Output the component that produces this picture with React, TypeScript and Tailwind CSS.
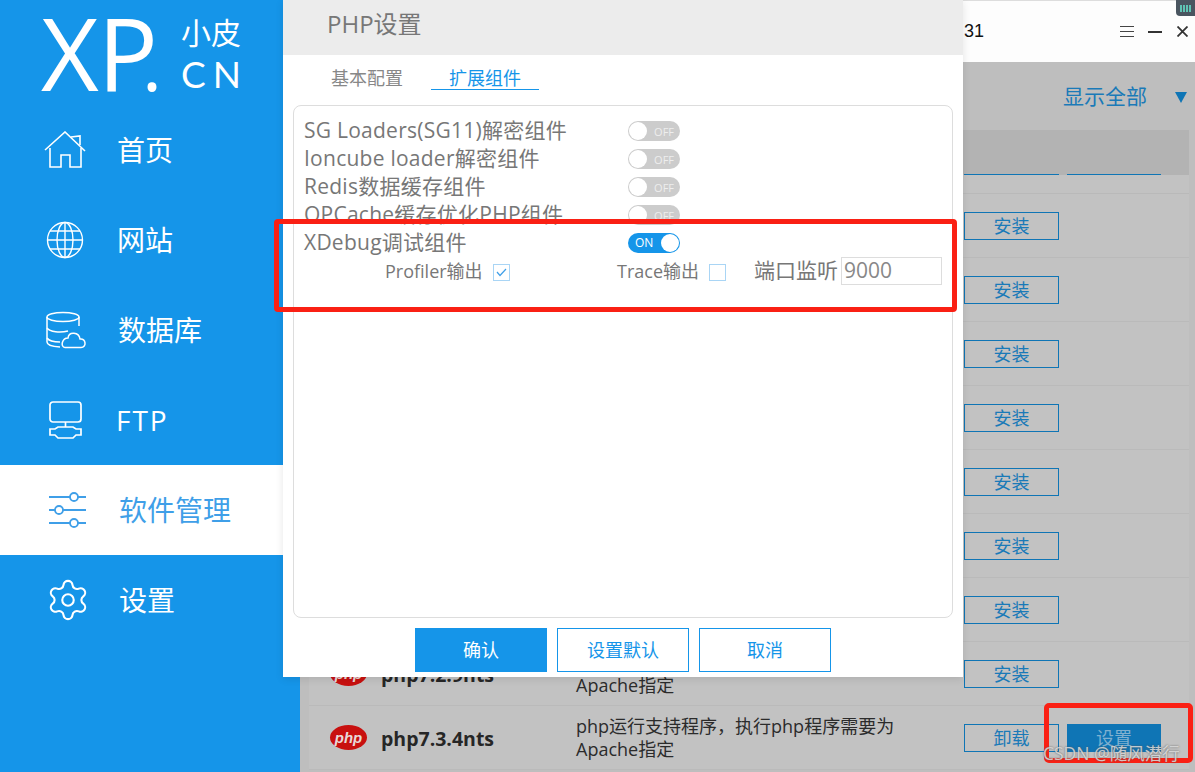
import { Settings } from "lucide-react";

const UI_FONT = "font-['Open_Sans','Noto_Sans_CJK_SC',sans-serif]";

const HomeIcon = () => (
  <svg width="42" height="38" viewBox="0 0 42 38" fill="none" stroke="currentColor" strokeWidth="1.6">
    <path d="M1 19 L21 1 L41 20" />
    <path d="M27 6 L36 5 L36 14" />
    <path d="M6 17 V36 H17 V24 H26 V36 H37 V17" />
  </svg>
);

const GlobeIcon = () => (
  <svg width="38" height="38" viewBox="0 0 38 38" fill="none" stroke="currentColor" strokeWidth="1.4">
    <circle cx="19" cy="19" r="17.5" />
    <ellipse cx="19" cy="19" rx="8" ry="17.5" />
    <path d="M19 1.5 V36.5 M1.5 19 H36.5 M4 10 H34 M4 28 H34" />
  </svg>
);

const DatabaseIcon = () => (
  <svg width="40" height="38" viewBox="0 0 40 38" fill="none" stroke="currentColor" strokeWidth="1.5">
    <ellipse cx="17" cy="6" rx="16" ry="4.5" />
    <path d="M1 6 V31 C1 34 6 35.5 14 36" />
    <path d="M33 6 V15" />
    <path d="M1 17 C4 21 14 22 22 20" />
    <path d="M1 27 C3 30 8 31 14 31" />
    <path d="M19 36.5 H35 C41 36.5 40 27 34 28 C33 21 23 20 22 27 C16 27 14 36 19 36.5 Z" />
  </svg>
);

const FtpIcon = () => (
  <svg width="33" height="38" viewBox="0 0 33 38" fill="none" stroke="currentColor" strokeWidth="1.7">
    <rect x="1" y="1" width="31" height="20" rx="3" />
    <path d="M16.5 21 V26" />
    <path d="M9 26 H24 L27 28 H32 V34 H27 L24 37 H9 L6 34 H1 V28 H6 Z" />
  </svg>
);

const SlidersIcon = () => (
  <svg width="37" height="38" viewBox="0 0 37 38" fill="none" stroke="currentColor" strokeWidth="1.8">
    <path d="M0 6 H21 M29 6 H37" />
    <circle cx="25" cy="6" r="4" />
    <path d="M0 19 H6 M14 19 H37" />
    <circle cx="10" cy="19" r="4" />
    <path d="M0 32 H21 M29 32 H37" />
    <circle cx="25" cy="32" r="4" />
  </svg>
);

const NAV_ITEMS = [
  { title: "首页", icon: <HomeIcon />, iconBox: "w-[117px] pl-[44px]" },
  { title: "网站", icon: <GlobeIcon />, iconBox: "w-[117px] pl-[46px]" },
  { title: "数据库", icon: <DatabaseIcon />, iconBox: "w-[118px] pl-[46px]" },
  { title: "FTP", icon: <FtpIcon />, iconBox: "w-[116px] pl-[49px]" },
  { title: "软件管理", icon: <SlidersIcon />, iconBox: "w-[119px] pl-[49px]", active: true },
  { title: "设置", icon: <Settings size={46} strokeWidth={1.1} />, iconBox: "w-[119px] pl-[45px]" },
];

const Sidebar = () => (
  <aside className="w-[300px] h-full shrink-0 bg-[#1595e9] text-white">
    <div className="h-[105px] flex items-start pl-[41px]">
      <div className="w-[140px] flex items-baseline font-['Open_Sans',sans-serif] font-medium">
        <span className="text-[100px] leading-[104px] tracking-[-1px]">XP</span>
        <span className="text-[76px] leading-[104px] -ml-[15px]">.</span>
      </div>
      <div className="pt-[13px] flex flex-col">
        <span className="font-['Noto_Sans_CJK_SC',sans-serif] text-[30px] leading-[36px]">小皮</span>
        <span className="font-['Lato',sans-serif] text-[37px] leading-[42px] tracking-[7px] mt-[4px]">CN</span>
      </div>
    </div>
    {NAV_ITEMS.map((item) => (
      <div key={item.title} className={`h-[90px] flex items-center ${item.active ? "bg-white text-[#3f9fe8]" : ""}`}>
        <div className={item.iconBox}>{item.icon}</div>
        <span className={`${UI_FONT} text-[28px] ${item.title === "FTP" ? "tracking-[2px]" : ""}`}>{item.title}</span>
      </div>
    ))}
  </aside>
);

const PhpLogo = () => (
  <div className="w-[37px] h-[25px] rounded-[50%] bg-[#c8100f] flex items-center justify-center">
    <span className="font-['Liberation_Sans',sans-serif] italic font-bold text-[15px] leading-none text-[#e8d8d8]">php</span>
  </div>
);

const SOFTWARE_ROWS = [
  { name: "php5.6.9nts" },
  { name: "php7.0.9nts" },
  { name: "php7.1.9nts" },
  { name: "php7.2.1nts" },
  { name: "php7.2.2nts" },
  { name: "php7.2.3nts" },
  { name: "php7.2.6nts" },
  { name: "php7.2.9nts" },
  { name: "php7.3.4nts", installed: true },
];

const SoftwareRow = ({ name, installed }: { name: string; installed?: boolean }) => (
  <div className="h-[64px] flex items-center bg-[#c2c2c2] border-b border-[#bababa] text-[#2b2b2b]">
    <div className="w-[72px] pl-[21px]">
      <PhpLogo />
    </div>
    <div className="w-[195px] pt-[2px] font-['Open_Sans',sans-serif] font-bold text-[19.5px] text-[#262626]">{name}</div>
    <div className={`w-[388px] ${UI_FONT} text-[18px] leading-[23px]`}>
      php运行支持程序，执行php程序需要为
      <br />
      Apache指定
    </div>
    <button className={`w-[95px] h-[28px] border border-[#0f75b5] text-[#1a7ab8] ${UI_FONT} text-[18px] leading-none`}>
      {installed ? "卸载" : "安装"}
    </button>
    {installed && (
      <button className={`ml-[8px] w-[94px] h-[28px] bg-[#0f75b5] text-[#7fb0d0] ${UI_FONT} text-[18px] leading-none`}>
        设置
      </button>
    )}
  </div>
);

const MainPanel = () => (
  <main className="flex-1 h-full flex flex-col bg-[#bebebe]">
    <div className="h-[62px] shrink-0 bg-[#fdfdfd] border-t border-[#dddddd] flex items-center">
      <span className="ml-[664px] font-['Liberation_Sans',sans-serif] text-[18px] text-[#111]">31</span>
      <svg className="ml-[136px]" width="14" height="12" viewBox="0 0 14 12" stroke="#444" strokeWidth="1">
        <path d="M0 .5 H14 M0 5.5 H14 M0 10.5 H14" />
      </svg>
      <span className="ml-[14px] w-[14px] h-[2px] bg-[#333]" />
      <svg className="ml-[15px]" width="11" height="11" viewBox="0 0 11 11" stroke="#333" strokeWidth="1.8">
        <path d="M.5 .5 L10.5 10.5 M10.5 .5 L.5 10.5" />
      </svg>
    </div>
    <div className="h-[68px] shrink-0 flex items-center pl-[763px] pt-[2px]">
      <span className={`${UI_FONT} text-[21px] text-[#1a7ab8]`}>显示全部</span>
      <span className="ml-[28px] w-0 h-0 border-x-[6px] border-x-transparent border-t-[11px] border-t-[#0f75b5]" />
    </div>
    <div className="ml-[9px] mr-[6px]">
      <div className="h-[45px] bg-[#b3b3b3] flex items-end pl-[655px]">
        <span className="w-[95px] h-px bg-[#0f75b5]" />
        <span className="ml-[8px] w-[94px] h-px bg-[#0f75b5]" />
      </div>
      <div className="h-[19px] border-b border-[#b9b9b9] bg-[#c2c2c2]" />
      {SOFTWARE_ROWS.map((row) => (
        <SoftwareRow key={row.name} name={row.name} installed={row.installed} />
      ))}
    </div>
  </main>
);

const Toggle = ({ on }: { on?: boolean }) =>
  on ? (
    <div className="w-[52px] h-[20px] rounded-full bg-[#1595e9] flex items-center justify-between pl-[7px] pr-px shrink-0 tracking-normal">
      <span className="text-[12px] leading-none text-white">ON</span>
      <span className="w-[18px] h-[18px] rounded-full bg-white" />
    </div>
  ) : (
    <div className="w-[52px] h-[20px] rounded-full bg-[#cccccc] flex items-center justify-between pl-px pr-[6px] shrink-0 tracking-normal">
      <span className="w-[18px] h-[18px] rounded-full bg-white" />
      <span className="text-[11px] leading-none text-[#eeeeee]">OFF</span>
    </div>
  );

const CheckBox = ({ checked }: { checked?: boolean }) => (
  <div className="w-[17px] h-[17px] mt-[2px] border border-[#a9d5f5] flex items-center justify-center shrink-0">
    {checked && (
      <svg width="11" height="9" viewBox="0 0 11 9" fill="none" stroke="#3f9fe8" strokeWidth="1.2">
        <path d="M1 4 L4 7.5 L10 1" />
      </svg>
    )}
  </div>
);

const EXTENSIONS = ["SG Loaders(SG11)解密组件", "Ioncube loader解密组件", "Redis数据缓存组件", "OPCache缓存优化PHP组件"];

const PhpSettingsDialog = () => (
  <div className={`absolute left-[283px] top-0 w-[680px] h-[677px] bg-white flex flex-col shadow-[0_2px_8px_rgba(0,0,0,0.1)] ${UI_FONT}`}>
    <div className="h-[55px] shrink-0 bg-[#ececec] flex items-center pl-[44px] pb-[7px] text-[24px] text-[#777777]">PHP设置</div>
    <div className="h-[35px] shrink-0 flex pl-[48px] text-[18px] leading-[46px]">
      <span className="text-[#888888] w-[100px]">基本配置</span>
      <div className="w-[108px] h-[35px] border-b border-[#1595e9] text-center text-[#1595e9]">扩展组件</div>
    </div>
    <div className="mx-[10px] mt-[15px] h-[513px] border border-[#dddddd] rounded-[8px] pl-[10px] pt-[11px] text-[#777777]">
      {EXTENSIONS.map((title) => (
        <div key={title} className="h-[28px] flex items-center text-[21px] tracking-[0.25px]">
          <span className="w-[324px] whitespace-nowrap">{title}</span>
          <Toggle />
        </div>
      ))}
      <div className="h-[28px] flex items-center text-[21px] tracking-[0.25px]">
        <span className="w-[324px]">XDebug调试组件</span>
        <Toggle on />
      </div>
      <div className="h-[28px] flex items-center">
        <span className="ml-[81px] w-[108px] text-[18px] whitespace-nowrap">Profiler输出</span>
        <CheckBox checked />
        <span className="ml-[107px] w-[92px] text-[18px] whitespace-nowrap">Trace输出</span>
        <CheckBox />
        <span className="ml-[28px] w-[87px] text-[21px] whitespace-nowrap">端口监听</span>
        <div className="w-[101px] h-[28px] border border-[#dddddd] pl-[2px] text-[21px] leading-[25px] text-[#888888]">9000</div>
      </div>
    </div>
    <div className="mt-[10px] flex pl-[132px] gap-[10px] text-[18px]">
      <button className="w-[132px] h-[44px] bg-[#1595e9] text-white">确认</button>
      <button className="w-[132px] h-[44px] border border-[#1595e9] text-[#1595e9]">设置默认</button>
      <button className="w-[132px] h-[44px] border border-[#1595e9] text-[#1595e9]">取消</button>
    </div>
  </div>
);

export default function App() {
  return (
    <div className="relative w-[1195px] h-[772px] overflow-hidden flex bg-white">
      <Sidebar />
      <MainPanel />
      <PhpSettingsDialog />
      {/* annotations on top of the screenshot */}
      <div className="absolute left-[274px] top-[219px] w-[683px] h-[93px] border-[5px] border-[#fa2014] rounded-[4px]" />
      <div className="absolute left-[1044px] top-[703px] w-[149px] h-[60px] border-[5px] border-[#fa2014] rounded-[5px]" />
      <div className="absolute left-[1176px] top-0 w-[19px] h-[16px] rounded-bl-[4px] bg-[#4a5560] flex items-center justify-center gap-px">
        <span className="w-[2px] h-[7px] bg-[#5fc4b4]" />
        <span className="w-[2px] h-[7px] bg-[#5fc4b4]" />
        <span className="w-[2px] h-[7px] bg-[#5fc4b4]" />
        <span className="w-[2px] h-[7px] bg-[#5fc4b4]" />
      </div>
      <span className={`absolute left-[1043px] top-[741px] text-[17.5px] leading-[24px] text-[#e8e8e8]/80 [text-shadow:0_0_2px_#555] ${UI_FONT}`}>
        CSDN @随风潜行
      </span>
    </div>
  );
}
